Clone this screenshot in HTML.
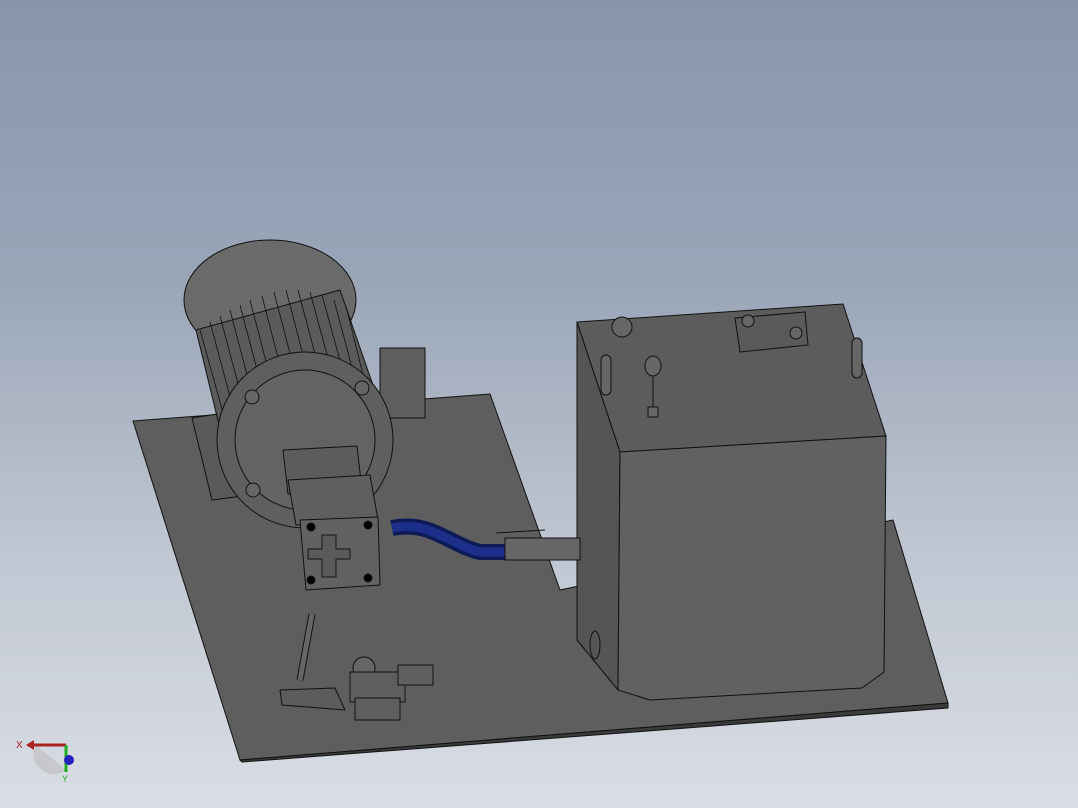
<!DOCTYPE html>
<html><head><style>
html,body{margin:0;padding:0;width:1078px;height:808px;overflow:hidden}
body{background:linear-gradient(#8896ac 0%,#9aa6b8 35%,#c2c8d3 70%,#d9dde5 100%)}
</style></head><body>
<svg width="1078" height="808" viewBox="0 0 1078 808" xmlns="http://www.w3.org/2000/svg" stroke="#111" stroke-width="1" stroke-linejoin="round">
<polygon points="133,421 490,394 560,590 893,520 948,703 240,760" fill="#5e5e5e"/>
<polygon points="240,760 948,703 948,708 242,762" fill="#3a3a3a"/>
<polygon points="577,322 843,304 886,436 620,452" fill="#5c5c5c"/>
<polygon points="577,322 620,452 618,690 577,640" fill="#555"/>
<polygon points="620,452 886,436 884,672 862,688 650,700 618,690" fill="#616161"/>
<polygon points="735,318 805,312 808,345 740,352" fill="#5a5a5a"/>
<circle cx="748" cy="321" r="6" fill="#666"/><circle cx="796" cy="333" r="6" fill="#666"/>
<circle cx="622" cy="327" r="10" fill="#666"/>
<ellipse cx="653" cy="366" rx="8" ry="10" fill="#666"/>
<line x1="653" y1="376" x2="653" y2="408"/><rect x="648" y="407" width="10" height="10" fill="#666"/>
<rect x="601" y="355" width="10" height="40" rx="5" fill="#666"/>
<rect x="852" y="338" width="10" height="40" rx="5" fill="#666"/>
<ellipse cx="595" cy="645" rx="5" ry="14" fill="#555"/>
<polygon points="192,418 230,412 250,495 212,500" fill="#5a5a5a"/>
<ellipse cx="270" cy="300" rx="86" ry="60" fill="#6a6a6a"/>
<polygon points="196,330 340,290 385,420 230,470" fill="#5b5b5b"/>
<g stroke-width="0.8">
<path d="M200,330 L225,420 M210,322 L235,415 M220,316 L245,410 M230,310 L255,405 M240,305 L265,400 M250,300 L275,396 M262,296 L287,392 M274,292 L299,388 M286,290 L311,385 M298,290 L323,384 M310,292 L335,384 M322,295 L347,386 M334,300 L358,390 M346,306 L368,395"/>
</g>
<rect x="380" y="348" width="45" height="70" fill="#5e5e5e"/>
<circle cx="305" cy="440" r="88" fill="#5f5f5f"/>
<circle cx="305" cy="440" r="70" fill="#636363"/>
<circle cx="252" cy="397" r="7" fill="#666"/><circle cx="362" cy="388" r="7" fill="#666"/><circle cx="253" cy="490" r="7" fill="#666"/>
<polygon points="283,450 357,446 362,490 288,494" fill="#5c5c5c"/>
<polygon points="288,480 370,475 378,520 296,525" fill="#5f5f5f"/>
<polygon points="300,520 378,517 380,585 306,590" fill="#626262"/>
<path d="M322,535 h14 v14 h14 v10 h-14 v18 h-14 v-18 h-14 v-10 h14 z" fill="#5a5a5a"/>
<circle cx="311" cy="527" r="4"/><circle cx="368" cy="525" r="4"/><circle cx="311" cy="580" r="4"/><circle cx="368" cy="578" r="4"/>
<path d="M392,528 C430,520 450,545 480,552 L505,552" stroke="#0c1a55" stroke-width="16" fill="none"/>
<path d="M392,528 C430,520 450,545 480,552 L505,552" stroke="#1d2f8a" stroke-width="9" fill="none"/>
<rect x="505" y="538" width="75" height="22" fill="#666"/>
<line x1="496" y1="533" x2="545" y2="530"/>
<path d="M312,614 L300,680" stroke="#111" stroke-width="7"/><path d="M312,614 L300,680" stroke="#666" stroke-width="5"/>
<polygon points="280,690 335,688 345,710 282,705" fill="#5c5c5c"/>
<circle cx="364" cy="668" r="11" fill="#666"/>
<rect x="350" y="672" width="55" height="30" fill="#5e5e5e"/>
<rect x="355" y="698" width="45" height="22" fill="#5e5e5e"/>
<rect x="398" y="665" width="35" height="20" fill="#606060"/>
<g stroke="none">
<path d="M36,745 a20,20 0 0 0 30,25 l-30,-25z" fill="#c8c8cc"/>
<line x1="66" y1="745" x2="30" y2="745" stroke="#a22" stroke-width="3"/>
<polygon points="26,745 34,740 34,750" fill="#a22"/>
<line x1="66" y1="745" x2="66" y2="772" stroke="#2a2" stroke-width="3"/>
<circle cx="69" cy="760" r="5" fill="#22b"/>
</g>
<text x="16" y="748" font-family="Liberation Sans" font-size="10" fill="#a22" stroke="none">X</text>
<text x="62" y="782" font-family="Liberation Sans" font-size="9" fill="#2a2" stroke="none">Y</text>
</svg>
</body></html>
